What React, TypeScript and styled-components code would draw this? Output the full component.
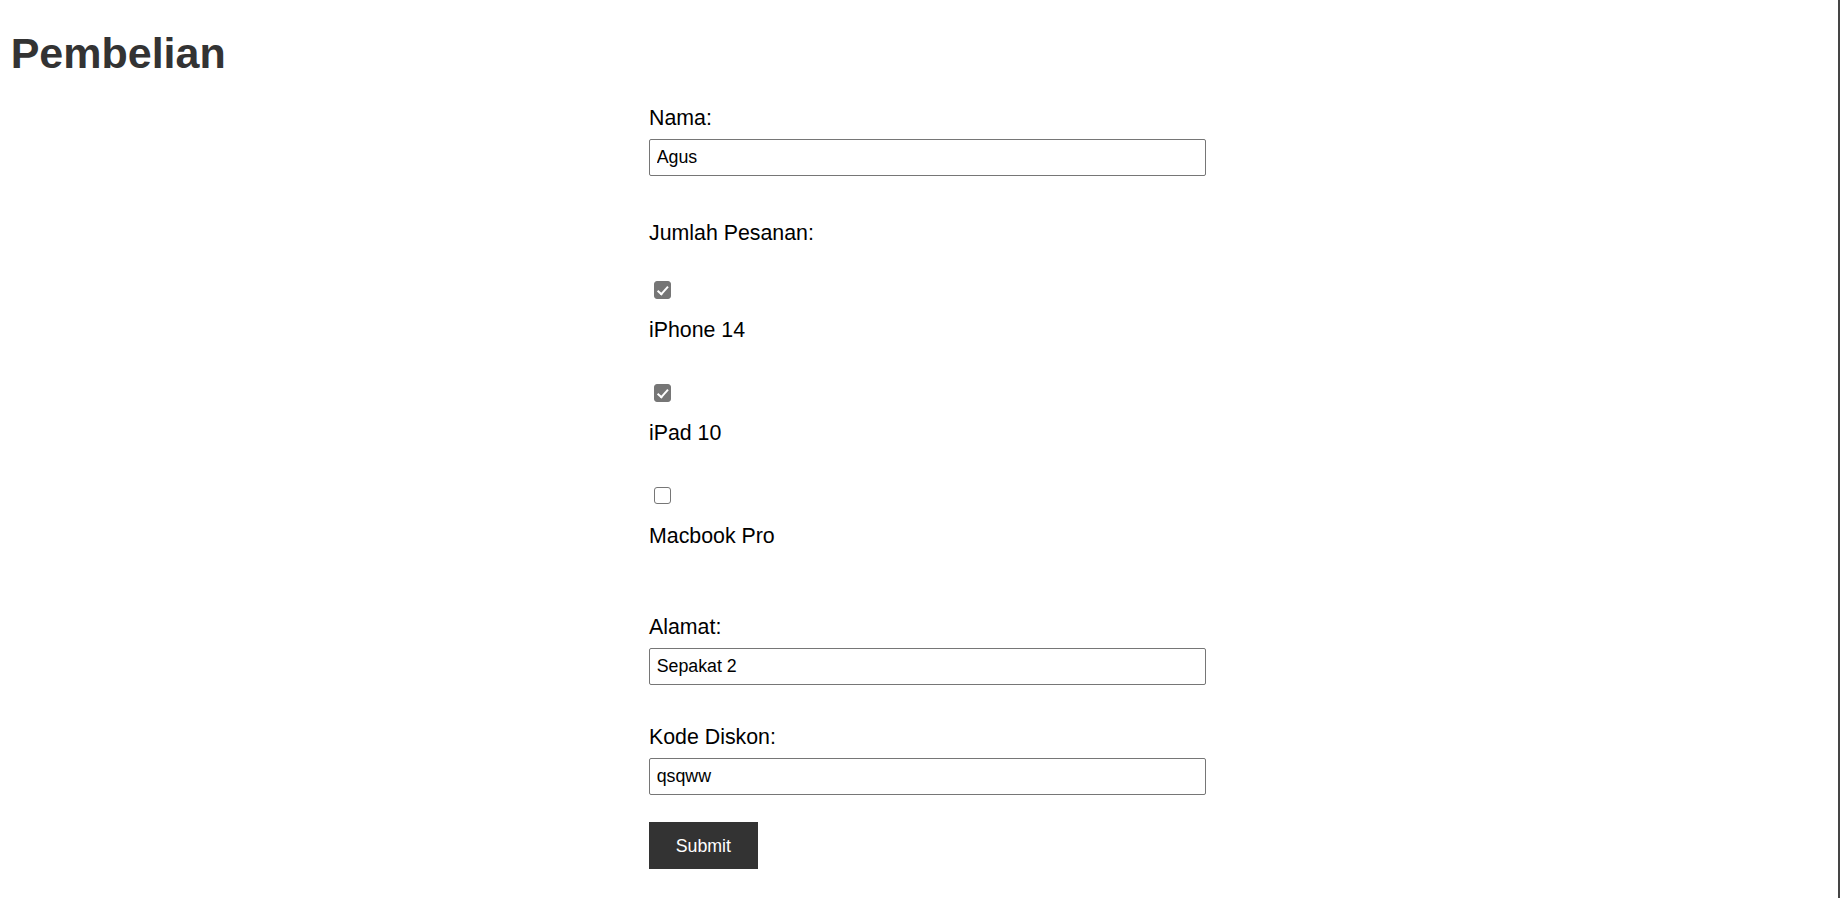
import React from "react";
import styled, { createGlobalStyle } from "styled-components";

const GlobalStyle = createGlobalStyle`
  html, body {
    margin: 0;
    padding: 0;
    background: #ffffff;
  }
  body {
    font-family: "Liberation Sans", Arial, sans-serif;
  }
  * {
    box-sizing: border-box;
  }
`;

const Page = styled.div`
  min-height: 100vh;
  padding: 0 10.67px;
  border-right: 2px solid #454545;
  font-family: "Liberation Sans", Arial, sans-serif;
  overflow: hidden;
`;

const Title = styled.h1`
  margin: 28.67px 0 28px;
  font-size: 43px;
  font-weight: 700;
  line-height: 49px;
  color: #333333;
`;

const FormRow = styled.div`
  display: flex;
  justify-content: center;
  padding-left: 17px;
`;

const Form = styled.form`
  width: 557px;
  display: flex;
  flex-direction: column;
  align-items: flex-start;
`;

const Field = styled.div<{ $after: number }>`
  display: flex;
  flex-direction: column;
  align-self: stretch;
  margin-bottom: ${(p) => p.$after}px;
`;

const Label = styled.label<{ $after?: number }>`
  display: block;
  font-size: 21.33px;
  line-height: 24.5px;
  color: #000000;
  margin-bottom: ${(p) => p.$after ?? 0}px;
`;

const TextInput = styled.input`
  width: 100%;
  height: 37px;
  padding: 0 6.67px;
  font-family: "Liberation Sans", Arial, sans-serif;
  font-size: 17.78px;
  color: #000000;
  background: #ffffff;
  border: 1px solid #767676;
  border-radius: 2px;
  outline: none;
`;

const CheckList = styled.div`
  display: flex;
  flex-direction: column;
  gap: 41.6px;
`;

const CheckItem = styled.div`
  display: flex;
  flex-direction: column;
  align-items: flex-start;
  gap: 19.5px;
`;

const Checkbox = styled.input`
  appearance: none;
  -webkit-appearance: none;
  position: relative;
  flex: none;
  width: 17.33px;
  height: 17.33px;
  margin: 0 0 0 5px;
  border: 1px solid #767676;
  border-radius: 3px;
  background: #ffffff;

  &:checked {
    background: #767676;
    border-color: #767676;
  }

  &:checked::after {
    content: "";
    position: absolute;
    left: 5.2px;
    top: 1.6px;
    width: 4px;
    height: 8.5px;
    border: solid #ffffff;
    border-width: 0 2.6px 2.6px 0;
    transform: rotate(42deg);
  }
`;

const SubmitButton = styled.button`
  height: 47.3px;
  padding: 0 26.67px;
  border: none;
  background: #333333;
  color: #ffffff;
  font-family: "Liberation Sans", Arial, sans-serif;
  font-size: 17.78px;
  line-height: 20.4px;
  cursor: pointer;
`;

const products = [
  { id: "iphone", name: "iPhone 14", checked: true },
  { id: "ipad", name: "iPad 10", checked: true },
  { id: "macbook", name: "Macbook Pro", checked: false },
];

export default function App() {
  return (
    <>
      <GlobalStyle />
      <Page>
        <Title>Pembelian</Title>
        <FormRow>
          <Form onSubmit={(e) => e.preventDefault()}>
            <Field $after={45}>
              <Label htmlFor="nama" $after={8.67}>Nama:</Label>
              <TextInput id="nama" type="text" defaultValue="Agus" />
            </Field>

            <Field $after={66.5}>
              <Label $after={36}>Jumlah Pesanan:</Label>
              <CheckList>
                {products.map((p) => (
                  <CheckItem key={p.id}>
                    <Checkbox id={p.id} type="checkbox" defaultChecked={p.checked} />
                    <Label htmlFor={p.id}>{p.name}</Label>
                  </CheckItem>
                ))}
              </CheckList>
            </Field>

            <Field $after={39.8}>
              <Label htmlFor="alamat" $after={8.67}>Alamat:</Label>
              <TextInput id="alamat" type="text" defaultValue="Sepakat 2" />
            </Field>

            <Field $after={27}>
              <Label htmlFor="diskon" $after={8.67}>Kode Diskon:</Label>
              <TextInput id="diskon" type="text" defaultValue="qsqww" />
            </Field>

            <SubmitButton type="submit">Submit</SubmitButton>
          </Form>
        </FormRow>
      </Page>
    </>
  );
}
